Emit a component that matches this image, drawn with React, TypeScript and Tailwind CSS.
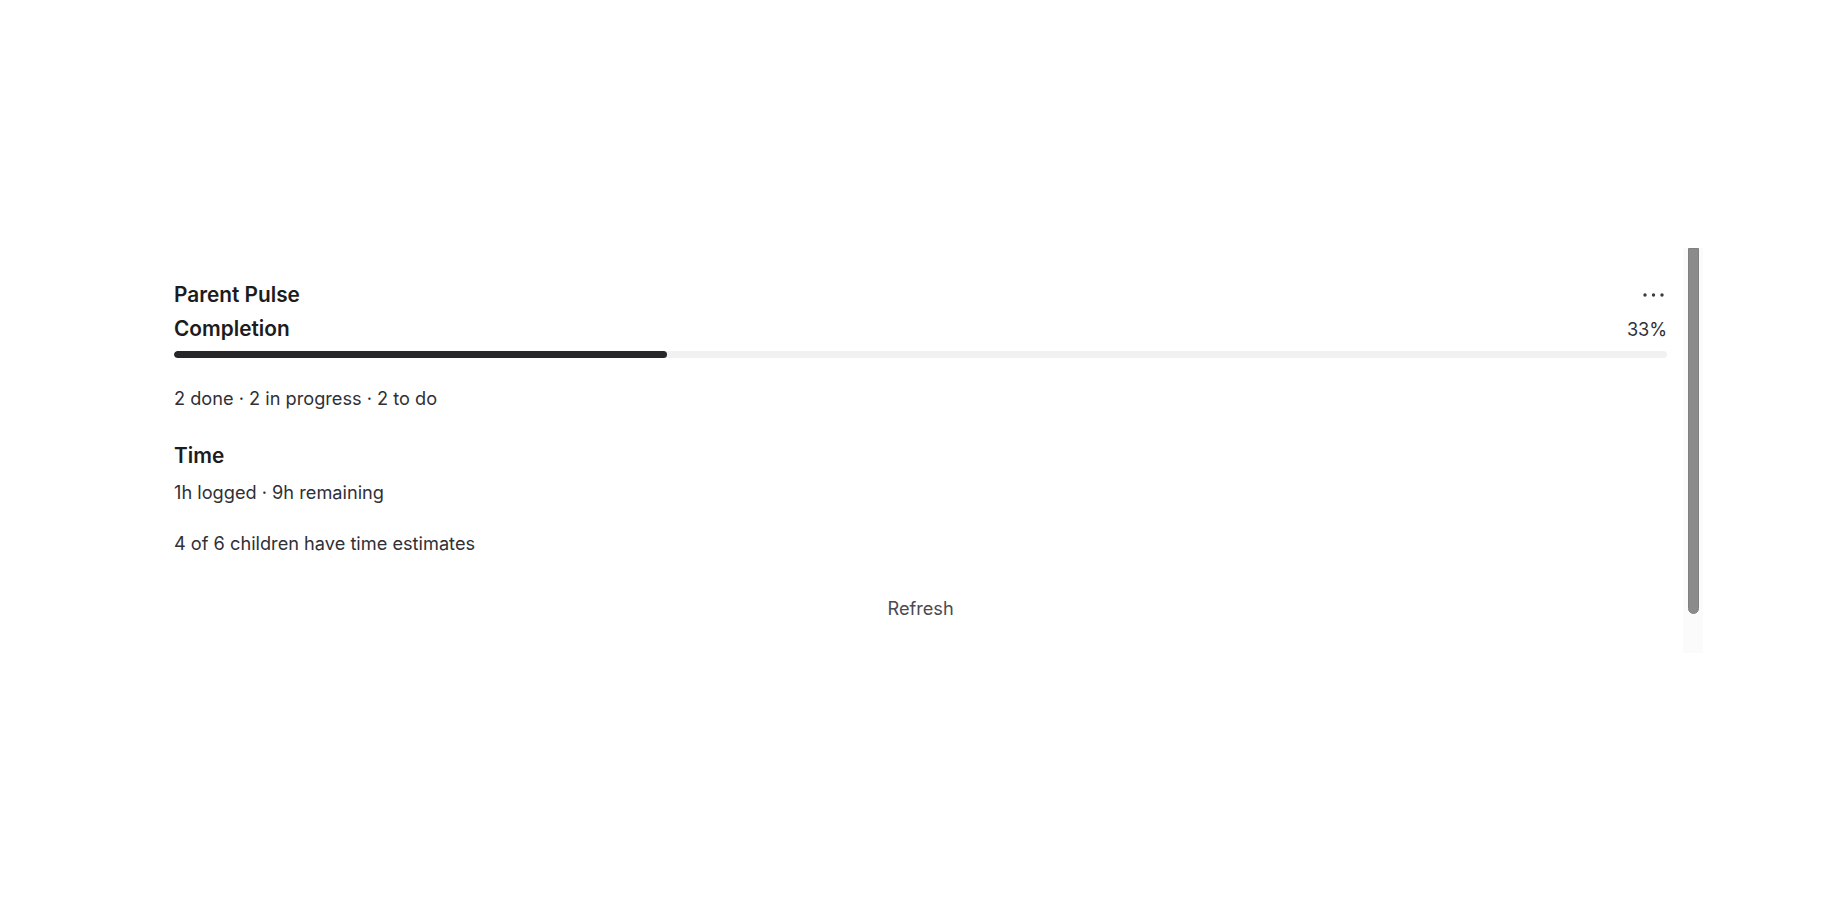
import React from "react";

export default function App() {
  const pct = 33;
  return (
    <div className="min-h-screen bg-white font-['Inter','Liberation_Sans',sans-serif]">
      <div className="pt-[248px] pl-[142px]">
        <div className="flex w-[1561px] h-[405px]">
          <div className="flex-1 pl-[32px] pr-[15.8px] pt-[33px]">
            <div className="flex items-center justify-between h-[28px]">
              <div className="text-[20.8px] leading-[28px] font-semibold text-[#1c1c20]">Parent Pulse</div>
              <button className="mr-[2px] flex items-center text-[#3a3a40]">
                <svg width="22" height="6" viewBox="0 0 22 6">
                  <circle cx="2" cy="3" r="1.7" fill="currentColor" />
                  <circle cx="10.5" cy="3" r="1.7" fill="currentColor" />
                  <circle cx="19" cy="3" r="1.7" fill="currentColor" />
                </svg>
              </button>
            </div>
            <div className="mt-[6px] flex items-baseline justify-between">
              <div className="text-[20.8px] leading-[28px] font-semibold text-[#1c1c20]">Completion</div>
              <div className="text-[18.2px] leading-[26.67px] text-[#303036]">{pct}%</div>
            </div>
            <div className="mt-[8px] h-[7px] w-full rounded-full bg-[#f1f1f2] overflow-hidden">
              <div className="h-full rounded-full bg-[#27272a]" style={{ width: `${pct}%` }} />
            </div>
            <div className="mt-[26.8px] text-[18.2px] leading-[26.67px] text-[#303036]">
              2 done · 2 in progress · 2 to do
            </div>
            <div className="mt-[30.6px] text-[20.8px] leading-[28px] font-semibold text-[#1c1c20]">Time</div>
            <div className="mt-[8.9px] text-[18.2px] leading-[26.67px] text-[#303036]">
              1h logged · 9h remaining
            </div>
            <div className="mt-[24.6px] text-[18.2px] leading-[26.67px] text-[#303036]">
              4 of 6 children have time estimates
            </div>
            <div className="mt-[38.3px] flex justify-center">
              <button className="text-[18.2px] leading-[26.67px] text-[#4a4a52]">Refresh</button>
            </div>
          </div>
          <div className="w-[20px] h-full bg-[#fbfbfb]">
            <div className="mx-auto w-[11px] h-[366px] bg-[#8b8b8b] border border-[#808080] rounded-b-full" />
          </div>
        </div>
      </div>
    </div>
  );
}
